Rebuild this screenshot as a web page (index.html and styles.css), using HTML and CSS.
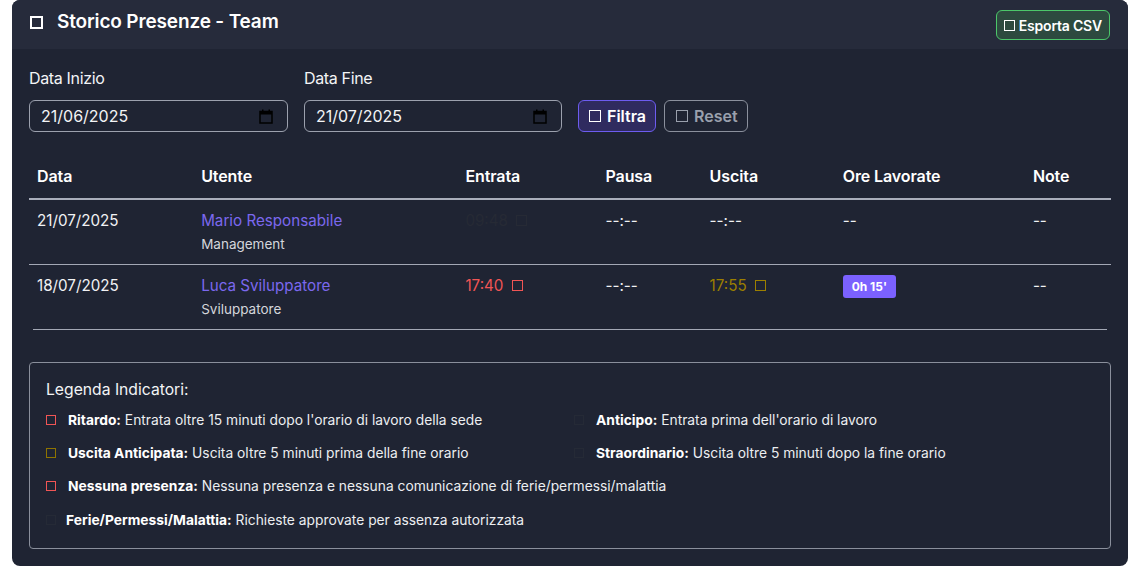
FILE: index.html
```html
<!DOCTYPE html>
<html lang="it">
<head>
<meta charset="utf-8">
<title>Storico Presenze - Team</title>
<link rel="stylesheet" href="styles.css">
</head>
<body>
<div class="card">
  <div class="card-header">
    <h1 class="title"><span class="box box-title"></span>Storico Presenze - Team</h1>
    <button class="btn btn-export"><span class="box box-sm"></span>Esporta CSV</button>
  </div>
  <div class="card-body">
    <div class="filters">
      <div class="field">
        <label class="label">Data Inizio</label>
        <div class="date-input"><span>21/06/2025</span>
          <svg class="cal" width="14" height="15" viewBox="0 0 14 15"><rect x="1" y="2.5" width="12" height="11.5" fill="none" stroke="#000" stroke-width="1.5"/><rect x="1" y="2.5" width="12" height="3" fill="#000"/><rect x="3" y="0.5" width="1.5" height="3" fill="#000"/><rect x="9.5" y="0.5" width="1.5" height="3" fill="#000"/></svg>
        </div>
      </div>
      <div class="field">
        <label class="label">Data Fine</label>
        <div class="date-input"><span>21/07/2025</span>
          <svg class="cal" width="14" height="15" viewBox="0 0 14 15"><rect x="1" y="2.5" width="12" height="11.5" fill="none" stroke="#000" stroke-width="1.5"/><rect x="1" y="2.5" width="12" height="3" fill="#000"/><rect x="3" y="0.5" width="1.5" height="3" fill="#000"/><rect x="9.5" y="0.5" width="1.5" height="3" fill="#000"/></svg>
        </div>
      </div>
      <div class="actions">
        <button class="btn btn-filter"><span class="box box-md"></span>Filtra</button>
        <button class="btn btn-reset"><span class="box box-md"></span>Reset</button>
      </div>
    </div>

    <table class="table">
      <colgroup>
        <col class="c1"><col class="c2"><col class="c3"><col class="c4"><col class="c5"><col class="c6"><col class="c7">
      </colgroup>
      <thead>
        <tr><th>Data</th><th>Utente</th><th>Entrata</th><th>Pausa</th><th>Uscita</th><th>Ore Lavorate</th><th>Note</th></tr>
      </thead>
      <tbody>
        <tr>
          <td>21/07/2025</td>
          <td><div class="user">Mario Responsabile</div><div class="role">Management</div></td>
          <td class="t-dim">09:48 <span class="box box-ind"></span></td>
          <td>--:--</td>
          <td>--:--</td>
          <td>--</td>
          <td>--</td>
        </tr>
        <tr class="last">
          <td>18/07/2025</td>
          <td><div class="user">Luca Sviluppatore</div><div class="role">Sviluppatore</div></td>
          <td class="t-red">17:40 <span class="box box-ind"></span></td>
          <td>--:--</td>
          <td class="t-olive">17:55 <span class="box box-ind"></span></td>
          <td><span class="badge">0h 15'</span></td>
          <td>--</td>
        </tr>
      </tbody>
    </table>
    <div class="table-end"></div>

    <div class="legend">
      <div class="legend-title">Legenda Indicatori:</div>
      <div class="legend-grid">
        <div class="item"><span class="box box-leg red"></span><b>Ritardo:</b>&nbsp;Entrata oltre 15 minuti dopo l'orario di lavoro della sede</div>
        <div class="item"><span class="box box-leg dim"></span><b>Anticipo:</b>&nbsp;Entrata prima dell'orario di lavoro</div>
        <div class="item"><span class="box box-leg olive"></span><b>Uscita Anticipata:</b>&nbsp;Uscita oltre 5 minuti prima della fine orario</div>
        <div class="item"><span class="box box-leg dim"></span><b>Straordinario:</b>&nbsp;Uscita oltre 5 minuti dopo la fine orario</div>
        <div class="item wide"><span class="box box-leg red"></span><b>Nessuna presenza:</b>&nbsp;Nessuna presenza e nessuna comunicazione di ferie/permessi/malattia</div>
        <div class="item wide ferie"><span class="box box-leg dim"></span><b>Ferie/Permessi/Malattia:</b>&nbsp;Richieste approvate per assenza autorizzata</div>
      </div>
    </div>
  </div>
</div>
</body>
</html>
```

FILE: styles.css
```css
* { box-sizing: border-box; }
html, body { margin: 0; padding: 0; background: #ffffff; }
body {
  padding: 0 12px;
  font-family: Inter, "Noto Sans", "Liberation Sans", sans-serif;
  color: #f3f4f6;
}
.card {
  background: #1f2433;
  border-radius: 8px;
  overflow: hidden;
}
.card-header {
  height: 49px;
  background: #262b3b;
  display: flex;
  align-items: flex-start;
  justify-content: space-between;
  padding: 0 18px 0 18px;
}
.title {
  margin: 0;
  font-size: 19px;
  font-weight: 600;
  line-height: 24px;
  color: #ffffff;
  display: flex;
  align-items: center;
  padding-top: 10px;
  letter-spacing: -0.15px;
}
.box {
  display: inline-block;
  border: 1.5px solid currentColor;
  flex: none;
}
.box-title { width: 13px; height: 13px; border-width: 2px; margin-right: 14px; }
.btn {
  font-family: inherit;
  display: inline-flex;
  align-items: center;
  border-radius: 6px;
  font-weight: 600;
  cursor: pointer;
}
.btn-export {
  margin-top: 10px;
  height: 30px;
  padding: 0 7px 0 7px;
  font-size: 14px;
  color: #ffffff;
  background: #2d4a3f;
  border: 1px solid #4cc76a;
  letter-spacing: -0.2px;
}
.box-sm { width: 11px; height: 11px; margin-right: 4px; }
.box-md { width: 12px; height: 12px; margin-right: 6px; }
.card-body { padding: 17px 17px 17px 17px; }
.filters { display: flex; align-items: flex-end; }
.field { display: flex; flex-direction: column; width: 259px; margin-right: 16px; }
.field + .field { width: 258px; }
.label { font-size: 16px; line-height: 24px; margin-bottom: 10px; color: #f3f4f6; letter-spacing: -0.35px; }
.date-input {
  height: 32px;
  border: 1px solid #9ca1ae;
  border-radius: 6px;
  display: flex;
  align-items: center;
  justify-content: space-between;
  padding: 0 14px 0 11px;
  font-size: 16px;
  color: #f3f4f6;
}
.cal { display: block; }
.actions { display: flex; gap: 8px; }
.btn-filter {
  height: 32px;
  padding: 0 9px 0 10px;
  font-size: 16px;
  color: #ffffff;
  background: #2f2b5f;
  border: 1px solid #6d5cf0;
}
.btn-reset {
  height: 32px;
  padding: 0 9px 0 11px;
  font-size: 16px;
  color: #9aa0ad;
  background: transparent;
  border: 1px solid #8b909d;
}
.table {
  width: 100%;
  margin-top: 20px;
  border-collapse: collapse;
  table-layout: fixed;
  font-size: 15.2px;
}
.c1 { width: 164px; } .c2 { width: 264px; } .c3 { width: 140px; } .c4 { width: 104px; }
.c5 { width: 133px; } .c6 { width: 190px; } .c7 { width: 86px; }
.table th {
  text-align: left;
  font-weight: 600;
  font-size: 16px;
  line-height: 24px;
  padding: 12px 8px 10px;
  border-bottom: 2px solid #a9aebb;
  color: #ffffff;
  letter-spacing: -0.1px;
}
.table td {
  vertical-align: top;
  line-height: 24px;
  padding: 9px 8px 10px;
  border-bottom: 1px solid #a3a8b5;
  color: #f1f2f4;
}
.table tr.last td { border-bottom: none; }
.table-end { height: 1px; margin: 0 4px; background: #a3a8b5; }
.user { color: #7b68ee; }
.role { font-size: 13.5px; line-height: 20px; margin-top: 1px; color: #d4d6db; }
.box-ind { width: 11px; height: 11px; margin-left: 4px; }
.t-dim { color: #262a35 !important; }
.t-red { color: #f05555 !important; }
.t-olive { color: #9c7f00 !important; }
.badge {
  display: inline-block;
  margin-top: 1px;
  background: #7b61ff;
  color: #ffffff;
  font-size: 12px;
  font-weight: 700;
  line-height: 23px;
  padding: 0 9px;
  border-radius: 3px;
}
.legend {
  margin-top: 32px;
  border: 1px solid #8a8f9c;
  border-radius: 4px;
  padding: 15px 16px 18px;
}
.legend-title { font-size: 15.7px; line-height: 24px; color: #f3f4f6; margin-bottom: 8px; }
.legend-grid {
  display: grid;
  grid-template-columns: 528px 1fr;
  row-gap: 13px;
}
.item {
  font-size: 13.8px;
  line-height: 20px;
  display: flex;
  align-items: center;
  color: #eceef1;
}
.item b { font-weight: 700; color: #ffffff; }
.item.wide { grid-column: 1 / -1; }
.item.ferie { margin-top: 1px; }
.item.ferie .box-leg { margin-right: 10px; }
.box-leg { width: 10px; height: 10px; margin-right: 12px; }
.red { color: #f05555; }
.olive { color: #8e7400; }
.dim { color: #252a36; }
```
